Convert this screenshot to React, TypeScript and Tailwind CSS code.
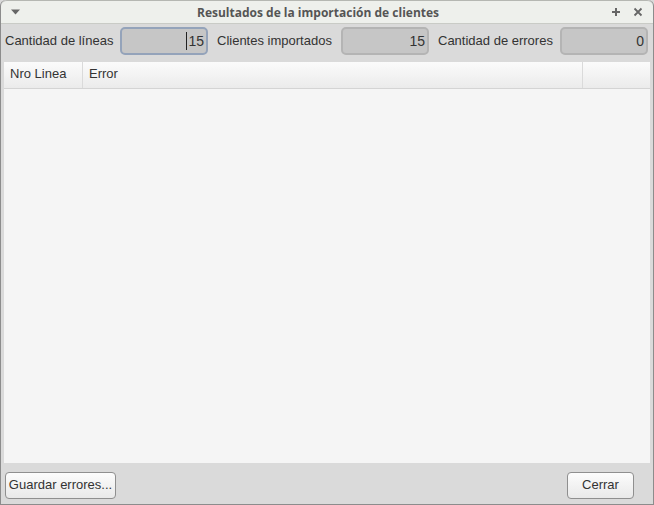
import React from 'react'

interface Field {
  label: string
  value: string
  focused?: boolean
}

const fields: Field[] = [
  { label: 'Cantidad de líneas', value: '15', focused: true },
  { label: 'Clientes importados', value: '15' },
  { label: 'Cantidad de errores', value: '0' }
]

function NumberField({ field }: { field: Field }) {
  return (
    <div
      className={
        'w-[88px] h-[28px] rounded-[5px] border-2 bg-[#c6c6c6] flex items-center justify-end pr-[2px] text-[14px] text-[#333] ' +
        (field.focused ? 'border-[#94a3ba]' : 'border-[#b4b4b4]')
      }
    >
      {field.focused && <span className="w-px h-[18px] bg-[#222] mr-[1px]" />}
      <span>{field.value}</span>
    </div>
  )
}

export default function App() {
  return (
    <div className="w-[654px] h-[505px] bg-[#dadada] text-[#333] font-['Liberation_Sans',Arial,sans-serif]">
      <div className="w-full h-full flex flex-col border border-[#8c8c8c] border-t-0 rounded-t-[6px] overflow-hidden">
        {/* Title bar */}
        <div className="h-[24px] flex items-center bg-[#eef0ec] border-b border-[#c9cbc6] border-t border-t-[#b5b7b2] rounded-t-[6px] px-[10px]">
          <svg width="9" height="6" viewBox="0 0 9 6" className="mr-[11px] ml-[0px]">
            <path d="M0 0.5h9L4.5 5.5z" fill="#666" />
          </svg>
          <div className="flex-1 text-center font-['Open_Sans',sans-serif] font-bold text-[12px] text-[#555] pt-[1px] pr-[6px]">
            Resultados de la importación de clientes
          </div>
          <div className="flex items-center gap-[12px] text-[#666]">
            <svg width="10" height="10" viewBox="0 0 10 10">
              <path d="M5 1v8M1 5h8" stroke="#666" strokeWidth="2" />
            </svg>
            <svg width="10" height="10" viewBox="0 0 10 10">
              <path d="M1.5 1.5l7 7M8.5 1.5l-7 7" stroke="#666" strokeWidth="1.8" />
            </svg>
          </div>
        </div>

        {/* Fields row */}
        <div className="flex items-center h-[32px] mt-[1px] pl-[4px]">
          <span className="text-[13px] w-[115px]">{fields[0].label}</span>
          <NumberField field={fields[0]} />
          <span className="text-[13px] ml-[9px] w-[124px]">{fields[1].label}</span>
          <NumberField field={fields[1]} />
          <span className="text-[13px] ml-[9px] w-[122px]">{fields[2].label}</span>
          <NumberField field={fields[2]} />
        </div>

        {/* Table */}
        <div className="mx-[3px] mt-[5px] flex-1 flex flex-col bg-[#f5f5f5]">
          <div className="flex h-[27px] bg-gradient-to-b from-[#fbfbfb] to-[#ebebeb] border-b border-[#d4d4d4] text-[13px]">
            <div className="w-[79px] border-r border-[#dadada] flex items-center pl-[6px] pb-[3px]">Nro Linea</div>
            <div className="w-[500px] border-r border-[#dadada] flex items-center pl-[6px] pb-[3px]">Error</div>
            <div className="flex-1" />
          </div>
          <div className="flex-1" />
        </div>

        {/* Buttons */}
        <div className="h-[41px] flex items-center justify-between px-[4px] pt-[3px]">
          <button className="h-[27px] w-[111px] rounded-[4px] border border-[#8f8f8f] bg-gradient-to-b from-[#fcfcfc] to-[#e9e9e9] text-[13px] text-[#333]">
            Guardar errores...
          </button>
          <button className="h-[27px] w-[67px] mr-[15px] rounded-[4px] border border-[#8f8f8f] bg-gradient-to-b from-[#fcfcfc] to-[#e9e9e9] text-[13px] text-[#333]">
            Cerrar
          </button>
        </div>
      </div>
    </div>
  )
}
